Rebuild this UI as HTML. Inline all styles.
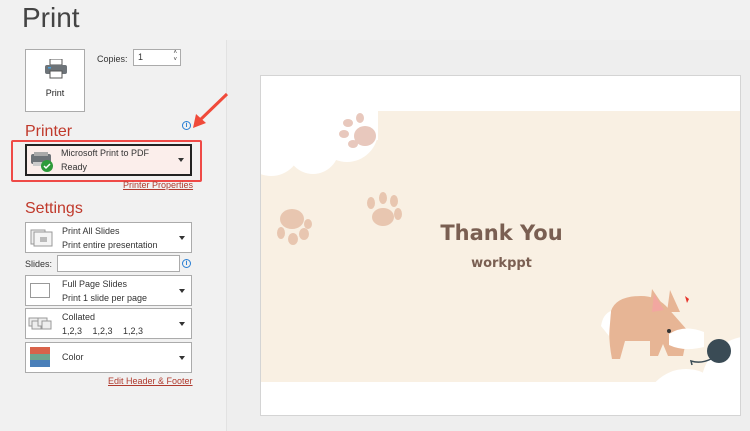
<!DOCTYPE html>
<html style="overflow:hidden;width:750px;height:431px"><head><style>
*{margin:0;padding:0;box-sizing:border-box}
body{width:750px;height:431px;overflow:hidden;background:#f1f1f1;font-family:"Liberation Sans",sans-serif;position:relative;color:#333}
.a{position:absolute}
.box{position:absolute;left:25px;width:167px;background:#fff;border:1px solid #ababab}
.t{position:absolute;left:36px;font-size:9px;color:#333}
.dd{position:absolute;right:6px;top:50%;margin-top:-2px;border-left:3px solid transparent;border-right:3px solid transparent;border-top:4px solid #333}
.h{color:#c0392b;font-size:16px;position:absolute;left:25px}
.lnk{position:absolute;font-size:9px;color:#b03a2e;text-decoration:underline}
.info{position:absolute;width:9px;height:9px;border:1px solid #2a7fd4;border-radius:50%;font-size:7px;color:#2a7fd4;text-align:center;line-height:7px;font-weight:bold}
</style></head><body>
<div class="a" style="left:22px;top:1px;font-size:28px;color:#444;line-height:34px">Print</div>
<div class="a" style="left:226px;top:40px;width:1px;height:391px;background:#e2e2e2"></div>
<div class="a" style="left:227px;top:40px;width:523px;height:391px;background:#eeeeee"></div>
<div class="a" style="left:25px;top:49px;width:60px;height:63px;background:#fff;border:1px solid #ababab">
<svg class="a" style="left:18px;top:9px" width="24" height="20"><rect x="6" y="0" width="12" height="6" fill="#fff" stroke="#555"/><rect x="1" y="6" width="22" height="9" rx="2" fill="#6d7378"/><rect x="6" y="12" width="12" height="7" fill="#fff" stroke="#555"/><rect x="4" y="8" width="3" height="1.5" fill="#4aa3df"/></svg>
<div class="a" style="left:0;width:58px;top:38px;text-align:center;font-size:9px;color:#222">Print</div></div>
<div class="a" style="left:97px;top:54px;font-size:9px">Copies:</div>
<div class="a" style="left:133px;top:49px;width:48px;height:17px;background:#fff;border:1px solid #ababab;font-size:9px;padding:2px 4px">1<span class="a" style="right:3px;top:0;font-size:6px;line-height:7px">˄<br>˅</span></div>
<div class="h" style="top:123px">Printer</div>
<div class="info" style="left:182px;top:121px">i</div>
<svg class="a" style="left:190px;top:92px" width="40" height="40"><line x1="37" y1="2" x2="8" y2="30" stroke="#f04a3a" stroke-width="3"/><polygon points="3,36 6,22 16,31" fill="#f04a3a"/></svg>
<div class="a" style="left:11px;top:140px;width:191px;height:42px;border:2px solid #ef4a47;border-radius:2px"></div>
<div class="a" style="left:25px;top:144px;width:167px;height:32px;background:#fbeeeb;border:2px solid #222">
<svg class="a" style="left:3px;top:4px" width="24" height="22"><rect x="1" y="4" width="20" height="10" rx="2" fill="#6d7378"/><rect x="4" y="2" width="14" height="4" fill="#aaa"/><rect x="3" y="12" width="16" height="4" fill="#ccc"/><circle cx="17" cy="16" r="6" fill="#2d9b3a"/><path d="M14 16l2 2 4-4" stroke="#fff" stroke-width="1.5" fill="none"/></svg>
<div class="t" style="top:2px;left:34px">Microsoft Print to PDF</div><div class="t" style="top:16px;left:34px">Ready</div><div class="dd"></div></div>
<div class="lnk" style="left:123px;top:180px">Printer Properties</div>
<div class="h" style="top:200px">Settings</div>
<div class="box" style="top:222px;height:31px"><svg class="a" style="left:4px;top:6px" width="26" height="18"><rect x="1" y="1" width="14" height="14" fill="#eee" stroke="#999"/><rect x="4" y="3" width="18" height="14" fill="#f4f4f4" stroke="#999"/><rect x="10" y="8" width="7" height="5" fill="#bbb"/></svg><div class="t" style="top:3px">Print All Slides</div><div class="t" style="top:17px">Print entire presentation</div><div class="dd"></div></div>
<div class="a" style="left:25px;top:259px;font-size:9px">Slides:</div>
<div class="a" style="left:57px;top:255px;width:123px;height:17px;background:#fff;border:1px solid #ababab"></div>
<div class="info" style="left:182px;top:259px">i</div>
<div class="box" style="top:275px;height:31px"><div class="a" style="left:4px;top:7px;width:20px;height:15px;border:1px solid #999"></div><div class="t" style="top:3px">Full Page Slides</div><div class="t" style="top:17px">Print 1 slide per page</div><div class="dd"></div></div>
<div class="box" style="top:308px;height:31px"><svg class="a" style="left:2px;top:8px" width="26" height="14"><rect x="1" y="1" width="9" height="8" fill="#eee" stroke="#999"/><rect x="4" y="4" width="9" height="8" fill="#eee" stroke="#999"/><rect x="10" y="1" width="9" height="8" fill="#eee" stroke="#999"/><rect x="14" y="4" width="9" height="8" fill="#eee" stroke="#999"/></svg><div class="t" style="top:3px">Collated</div><div class="t" style="top:17px;word-spacing:8px">1,2,3 1,2,3 1,2,3</div><div class="dd"></div></div>
<div class="box" style="top:342px;height:31px"><div class="a" style="left:4px;top:4px;width:20px;height:7px;background:#d9634a"></div><div class="a" style="left:4px;top:11px;width:20px;height:6px;background:#6fa58e"></div><div class="a" style="left:4px;top:17px;width:20px;height:7px;background:#4a7fb9"></div><div class="t" style="top:9px">Color</div><div class="dd"></div></div>
<div class="lnk" style="left:108px;top:376px">Edit Header &amp; Footer</div>
<div class="a" style="left:260px;top:75px;width:481px;height:341px;background:#fff;border:1px solid #d4d4d4;overflow:hidden">
<div class="a" style="left:0;top:35px;width:481px;height:271px;background:#f9f0e3"></div>
<svg class="a" style="left:0;top:0" width="481" height="341">
<circle cx="10" cy="70" r="30" fill="#fff"/><circle cx="52" cy="72" r="26" fill="#fff"/><circle cx="86" cy="55" r="31" fill="#fff"/><rect x="0" y="34" width="117" height="30" fill="#fff"/>
<g fill="#e8c8bd"><ellipse cx="104" cy="60" rx="11" ry="10"/><ellipse cx="87" cy="47" rx="5" ry="4"/><ellipse cx="99" cy="42" rx="4" ry="5"/><ellipse cx="83" cy="58" rx="5" ry="4"/><ellipse cx="92" cy="68" rx="5" ry="4"/></g>
<g fill="#e8c6b0"><ellipse cx="122" cy="141" rx="11" ry="9"/><ellipse cx="110" cy="127" rx="4" ry="6"/><ellipse cx="122" cy="122" rx="4" ry="6"/><ellipse cx="133" cy="125" rx="4" ry="6"/><ellipse cx="137" cy="138" rx="4" ry="6"/>
<ellipse cx="31" cy="143" rx="12" ry="10"/><ellipse cx="20" cy="157" rx="4" ry="6"/><ellipse cx="32" cy="163" rx="5" ry="6"/><ellipse cx="43" cy="158" rx="5" ry="6"/><ellipse cx="47" cy="148" rx="4" ry="5"/></g>
<circle cx="425" cy="335" r="42" fill="#fff"/><circle cx="490" cy="310" r="50" fill="#fff"/><rect x="380" y="306" width="101" height="40" fill="#fff"/>
<path d="M350 235 q5 -15 30 -15 q15 0 25 10 l22 25 l-5 25 l-15 0 l-5 -12 l-5 12 l-8 0 l0 -15 l-25 0 l-5 18 l-8 0 q-5 -25 -1 -48 z" fill="#e7b595"/>
<path d="M388 238 l3 -25 l15 22 z M406 236 l3 -22 l10 22 z" fill="#e7b595"/><path d="M391 236 l2 -18 l10 16 z" fill="#f2a7a0"/>
<path d="M340 250 q2 -12 10 -15 l-2 25 z" fill="#fff"/>
<path d="M408 258 q15 -10 35 -2 l0 15 q-20 5 -35 -2 z" fill="#fff"/><circle cx="408" cy="255" r="2" fill="#333"/>
<path d="M424 220 l4 3 l-2 4 z" fill="#e6332a"/>
<circle cx="458" cy="275" r="12" fill="#3a4b55"/><path d="M450 283 q-10 5 -20 2 l1 4" stroke="#3a4b55" stroke-width="1.5" fill="none"/>
</svg>
<div class="a" style="left:0;width:481px;top:145px;text-align:center;font-size:21px;font-weight:bold;color:#7a5f52;font-family:'DejaVu Sans',sans-serif">Thank You</div>
<div class="a" style="left:0;width:481px;top:180px;text-align:center;font-size:13px;font-weight:bold;color:#7a5f52;font-family:'DejaVu Sans',sans-serif">workppt</div>
</div>
</body></html>
